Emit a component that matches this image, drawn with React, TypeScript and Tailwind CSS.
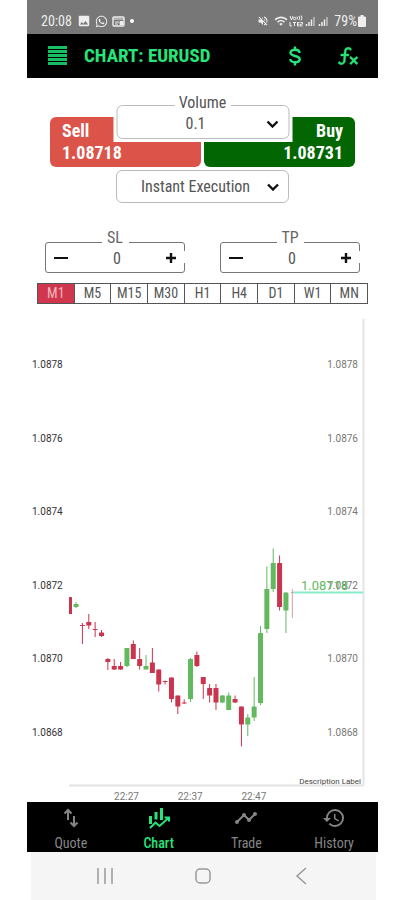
import { useState, type JSX } from 'react';
import { MdHistory, MdImage, MdTimeline, MdVolumeOff, MdWifi } from 'react-icons/md';
import { FaWhatsapp } from 'react-icons/fa';

const TIMEFRAMES = ['M1', 'M5', 'M15', 'M30', 'H1', 'H4', 'D1', 'W1', 'MN'];
const PRICES = ['1.0878', '1.0876', '1.0874', '1.0872', '1.0870', '1.0868'];
const TIMES = ['22:27', '22:37', '22:47'];

// [direction, wick top, body top, body bottom, wick bottom]
const CANDLES: [string, number, number, number, number][] = [
  ['down', 597, 597, 614, 614],
  ['up', 602, 604, 607, 608],
  ['down', 623, 625, 626, 644],
  ['down', 614, 622, 625.5, 629],
  ['down', 622, 629, 630, 637],
  ['down', 630, 632.5, 636, 637],
  ['down', 658, 659, 662, 670],
  ['down', 659, 666, 669.5, 670],
  ['down', 662, 666, 669.5, 670],
  ['up', 648, 648, 666, 667],
  ['down', 640.5, 644, 659, 659],
  ['down', 648, 659, 666, 669.5],
  ['up', 655, 666, 669.5, 669.5],
  ['down', 648, 662.5, 673, 673],
  ['down', 669.5, 669.5, 684.5, 691.5],
  ['down', 680.5, 681, 682, 684.5],
  ['down', 677.5, 677.5, 699, 702.5],
  ['down', 695.5, 695.5, 706.5, 714],
  ['down', 699.5, 702.5, 703.5, 704],
  ['up', 658, 659, 699, 702],
  ['down', 651.5, 655, 666, 667],
  ['down', 677, 677, 684, 699],
  ['down', 684, 688, 695.5, 702.5],
  ['down', 684, 688, 702.5, 710],
  ['up', 695, 695.5, 702.5, 703],
  ['up', 692.5, 695.5, 710, 710],
  ['down', 695.5, 699, 702.5, 703],
  ['down', 706.5, 706.5, 724.5, 746.5],
  ['up', 714, 717.5, 724.5, 736],
  ['up', 677, 706.5, 717.5, 721],
  ['up', 626, 633, 703, 705],
  ['up', 566.5, 589, 629, 633],
  ['up', 548.5, 563, 589, 592],
  ['down', 555.5, 563, 607, 610.5],
  ['up', 592.5, 592.5, 610.5, 633],
  ['live', 589, 592, 593, 618],
];

const COLORS: Record<string, string> = { up: '#62b95f', down: '#c9354f', live: '#dc98a6' };

function StatusBar(): JSX.Element {
  return (
    <div className="flex h-[34px] items-end justify-between bg-[#777777] pr-3 pb-1 pl-[14px] text-sm leading-[18px] text-[#eee]">
      <div className="flex items-center gap-1">
        <span className="pr-px">20:08</span>
        <MdImage className="size-[14px]" />
        <FaWhatsapp className="size-[13px]" />
        <svg className="size-[13px]" viewBox="0 0 13 13" fill="none" stroke="currentColor">
          <rect x="1" y="2" width="11" height="9" rx="1" strokeWidth="1.4" />
          <path d="M1 4h11M3 7h4M3 9h3" />
          <path d="M8 6.500h3v3H8z" fill="currentColor" />
        </svg>
        <span className="ml-px size-1 rounded-full bg-white" />
      </div>
      <div className="flex items-center gap-px">
        <MdVolumeOff className="mr-1 size-3" />
        <MdWifi className="size-[14px]" />
        <svg className="h-3 w-[14px]" viewBox="0 0 14 12" fill="none" stroke="currentColor">
          <path d="M1 1l1.500 4L4 1M8 1.500q1.200 1.500 0 3M10 1q1.600 2 0 4M12 .5q2 2.500 0 5M1 7v4h2M4 7.500h3M5.500 7.500V11M10.500 7.500H8.500v3.500h2M8.500 9.200h2M11.500 7.500h2v1.700h-2V11h2" />
          <circle cx="5.700" cy="3.500" r="1.200" />
        </svg>
        <SignalIcon />
        <SignalIcon />
        <span className="ml-1">79%</span>
        <svg className="h-3 w-2" viewBox="0 0 8 12" fill="currentColor">
          <path d="M2.500 0h3v1.500H7a1 1 0 0 1 1 1V11a1 1 0 0 1-1 1H1a1 1 0 0 1-1-1V2.500a1 1 0 0 1 1-1h1.500z" />
        </svg>
      </div>
    </div>
  );
}

function SignalIcon(): JSX.Element {
  return (
    <svg className="h-3 w-[12px]" viewBox="0 0 12 12" fill="none" stroke="currentColor">
      <path d="M2.500 11V9M5 11V7M7.500 11V4.500" strokeWidth="1.500" />
      <path d="M10 11V2" strokeWidth="1.500" opacity=".6" />
    </svg>
  );
}

function Header(): JSX.Element {
  return (
    <header className="flex h-11 items-center bg-black pr-[18px] pl-[21px] text-[#25e57b]">
      <button type="button" aria-label="Menu">
        <svg className="h-5 w-[19px]" viewBox="0 0 19 20" stroke="#19bd66" strokeWidth="3">
          <path d="M0 1.500h19M0 5.500h19M0 9.500h19M0 13.500h19M0 17.500h19" />
        </svg>
      </button>
      <h1 className="ml-[17px] grow text-[19px] font-bold">CHART: EURUSD</h1>
      <button type="button" aria-label="Deposit">
        <svg className="size-6" viewBox="0 0 24 24" fill="none" stroke="currentColor" strokeWidth="2.400">
          <path d="M12 2.500V6M12 18v3.500" />
          <path d="M16.500 9c0-2-1.900-3.200-4.500-3.200S7.500 7 7.500 8.800c0 4.200 9.200 2.200 9.200 6.400 0 1.900-1.900 3-4.700 3s-4.700-1.200-4.700-3.300" />
        </svg>
      </button>
      <button type="button" aria-label="Indicators" className="ml-[29px]">
        <svg className="size-6" viewBox="0 0 24 24" fill="currentColor" stroke="currentColor" strokeWidth=".4">
          <path d="M12.420 5.290C11.320 5.190 10.350 6 10.250 7.110L10 10h2.820v2h-3l-.44 5.070C9.180 19.270 7.240 20.900 5.040 20.700 3.790 20.590 2.660 19.900 2 18.830l1.500-1.500c.33 1.050 1.460 1.640 2.500 1.300.78-.24 1.330-.93 1.400-1.740L7.820 12h-3v-2H8l.27-3.070C8.460 4.730 10.390 3.100 12.600 3.280c1.260.11 2.400.81 3.060 1.890l-1.500 1.500c-.25-.77-.93-1.310-1.740-1.380M22 13.650l-1.410-1.410-2.830 2.830-2.830-2.830-1.430 1.410 2.850 2.850-2.850 2.810 1.430 1.410 2.830-2.830 2.830 2.830L22 19.310l-2.830-2.810z" />
        </svg>
      </button>
    </header>
  );
}

function Chevron(): JSX.Element {
  return (
    <svg
      className="pointer-events-none absolute top-1/2 right-[10px] h-2 w-3 -translate-y-1/2"
      viewBox="0 0 12 8"
      fill="none"
      stroke="#111"
      strokeWidth="2.400">
      <path d="M1 1.500l5 5 5-5" />
    </svg>
  );
}

function OrderPanel(): JSX.Element {
  return (
    <section className="px-[23px] pt-[39px] text-[#555]">
      <div className="relative grid grid-cols-2 gap-[3px] text-lg leading-[22px] font-bold text-white">
        <button type="button" className="rounded-md bg-[#dc5449] px-3 py-[3px] text-left">
          <span className="block">Sell</span>
          <span className="block">1.08718</span>
        </button>
        <button type="button" className="rounded-md bg-[#026602] px-3 py-[3px] text-right">
          <span className="block">Buy</span>
          <span className="block">1.08731</span>
        </button>
        <div className="absolute -top-6 left-1/2 w-[179px] -translate-x-1/2 px-[3px] pb-[3px] text-base font-normal text-[#555]">
          <div className="absolute inset-x-0 top-3 bottom-0 bg-white" />
          <fieldset className="relative rounded-md border border-[#bbb] pb-1">
            <legend className="mx-auto px-1 pb-1 text-base leading-5">
              <label htmlFor="volume">Volume</label>
            </legend>
            <div className="relative -mt-1 h-[21px]">
              <select
                id="volume"
                className="block h-[21px] w-full appearance-none bg-transparent pr-[14px] text-center text-base leading-5 [text-align-last:center]">
                <option>0.1</option>
              </select>
              <Chevron />
            </div>
          </fieldset>
        </div>
      </div>
      <div className="relative mx-auto mt-[3px] w-[173px]">
        <select
          aria-label="Execution mode"
          className="block h-[33px] w-full appearance-none rounded-md border border-[#bbb] bg-white pr-[14px] text-center text-base leading-5 [text-align-last:center]">
          <option>Instant Execution</option>
        </select>
        <Chevron />
      </div>
    </section>
  );
}

function Stepper({ id, label }: { id: string; label: string }): JSX.Element {
  const [value, setValue] = useState(0);

  return (
    <fieldset className="relative min-w-0 grow basis-0 rounded-[3px] border border-[#777] text-[#666]">
      <legend className="mx-auto px-[5px] pb-2 text-center text-base leading-4">
        <label htmlFor={id} className="block w-[17px]">
          {label}
        </label>
      </legend>
      <div className="-mt-1 flex h-[22px] items-start px-[5px] text-[#111]">
        <button type="button" aria-label={`Decrease ${label}`} onClick={() => setValue(value - 1)}>
          <svg className="h-4 w-5" viewBox="0 0 20 16" stroke="currentColor" strokeWidth="2">
            <path d="M3 8h14" />
          </svg>
        </button>
        <input
          id={id}
          value={value}
          onChange={e => setValue(Number(e.target.value) || 0)}
          className="h-4 w-0 grow text-center text-base leading-4 text-[#555]"
        />
        <button type="button" aria-label={`Increase ${label}`} onClick={() => setValue(value + 1)}>
          <svg className="h-4 w-4" viewBox="0 0 16 16" stroke="currentColor" strokeWidth="2.400">
            <path d="M3 8h10M8 3v10" />
          </svg>
        </button>
      </div>
      <span className="absolute -right-px bottom-[9px] h-3 w-px bg-white" />
    </fieldset>
  );
}

function Timeframes(): JSX.Element {
  const [selected, setSelected] = useState('M1');

  return (
    <div className="mx-[10px] mt-[10px] flex border-r border-[#555]">
      {TIMEFRAMES.map(tf => (
        <button
          key={tf}
          type="button"
          onClick={() => setSelected(tf)}
          className={`h-[21px] grow basis-0 border border-r-0 border-[#555] text-sm leading-[19px]
            ${selected === tf ? 'bg-[#d0364d] text-[#f3b6bd]' : 'bg-white text-[#555]'}`}>
          {tf}
        </button>
      ))}
    </div>
  );
}

function PriceChart(): JSX.Element {
  return (
    <svg
      className="block w-full font-[Roboto]"
      viewBox="27 304 351 498"
      role="img"
      aria-label="EURUSD price chart">
      <path d="M363.500 319V785.500M69 785.500H363.500" stroke="#e4e4e4" strokeWidth="2" fill="none" />
      {PRICES.map((price, i) => (
        <g key={price} fontSize="10">
          <text x="32" y={368 + i * 73.6} fill="#333">
            {price}
          </text>
          <text x="358" y={368 + i * 73.6} fill="#777" textAnchor="end">
            {price}
          </text>
        </g>
      ))}
      {CANDLES.map(([dir, high, top, bottom, low], i) => {
        const x = 69.7 + i * 6.36;
        const width = dir === 'live' ? 3 : 5;
        return (
          <g key={i} fill={COLORS[dir]}>
            <rect x={x - 0.5} y={high} width="1" height={low - high} />
            <rect
              x={i === 0 ? 69 : x - width / 2}
              y={top}
              width={i === 0 ? 3 : width}
              height={bottom - top}
              rx=".5"
            />
          </g>
        );
      })}
      <path d="M293 592.500H363" stroke="#86edc6" strokeWidth="2" />
      <text x="301" y="590" fontSize="13" fill="#62b95f">
        1.08718
      </text>
      <text x="361" y="784" fontSize="8" fill="#444" textAnchor="end">
        Description Label
      </text>
      {TIMES.map((time, i) => (
        <text key={time} x={126.5 + i * 63.7} y="800" fontSize="10" fill="#777" textAnchor="middle">
          {time}
        </text>
      ))}
    </svg>
  );
}

function QuoteIcon(): JSX.Element {
  return (
    <svg className="size-6" viewBox="0 0 24 24" fill="none" stroke="currentColor" strokeWidth="2">
      <path d="M9 14V4M5.500 7.500L9 4l3.500 3.500" />
      <path d="M15 10v10M11.500 16.500L15 20l3.500-3.500" />
    </svg>
  );
}

function ChartIcon(): JSX.Element {
  return (
    <svg className="size-6" viewBox="0 0 24 24" fill="none" stroke="currentColor">
      <path d="M3.500 10v8M9 6v7.500M14.500 2v12" strokeWidth="3" />
      <path d="M3 22l5.500-5.500 4 3.500 9-8M17.500 11.500h4.500v4" strokeWidth="2" />
    </svg>
  );
}

const TABS = [
  { name: 'Quote', icon: <QuoteIcon /> },
  { name: 'Chart', icon: <ChartIcon /> },
  { name: 'Trade', icon: <MdTimeline className="size-6" /> },
  { name: 'History', icon: <MdHistory className="size-6" /> },
];

function TabBar(): JSX.Element {
  return (
    <nav className="grid h-[50px] grid-cols-4 bg-black">
      {TABS.map(({ name, icon }) => (
        <a
          key={name}
          href={`#${name.toLowerCase()}`}
          className={`flex flex-col items-center pt-1 text-sm leading-4
            ${name === 'Chart' ? 'font-medium text-[#25e57b]' : 'text-[#858585]'}`}>
          {icon}
          <span className="mt-[5px]">{name}</span>
        </a>
      ))}
    </nav>
  );
}

function SystemBar(): JSX.Element {
  return (
    <div className="mr-[2px] ml-1 flex h-12 items-center justify-around bg-[#f5f5f5] px-[25px] text-[#999]">
      <button type="button" aria-label="Recent apps">
        <svg className="size-5" viewBox="0 0 20 20" stroke="currentColor" strokeWidth="1.500">
          <path d="M3 2v16M10 2v16M17 2v16" />
        </svg>
      </button>
      <button type="button" aria-label="Home">
        <svg className="size-5" viewBox="0 0 20 20" fill="none" stroke="currentColor" strokeWidth="1.500">
          <rect x="3" y="3" width="14" height="14" rx="4" />
        </svg>
      </button>
      <button type="button" aria-label="Back">
        <svg className="size-5" viewBox="0 0 20 20" fill="none" stroke="currentColor" strokeWidth="1.500">
          <path d="M14 2l-9 8 9 8" />
        </svg>
      </button>
    </div>
  );
}

function App(): JSX.Element {
  return (
    <div className="min-h-screen bg-white pr-[26px] pl-[27px] font-['Roboto_Condensed','Liberation_Sans_Narrow',Roboto,sans-serif]">
      <StatusBar />
      <Header />
      <main>
        <OrderPanel />
        <div className="mt-[27px] flex gap-[35px] px-[18px]">
          <Stepper id="stop-loss" label="SL" />
          <Stepper id="take-profit" label="TP" />
        </div>
        <Timeframes />
        <PriceChart />
      </main>
      <TabBar />
      <SystemBar />
    </div>
  );
}

export default App;
